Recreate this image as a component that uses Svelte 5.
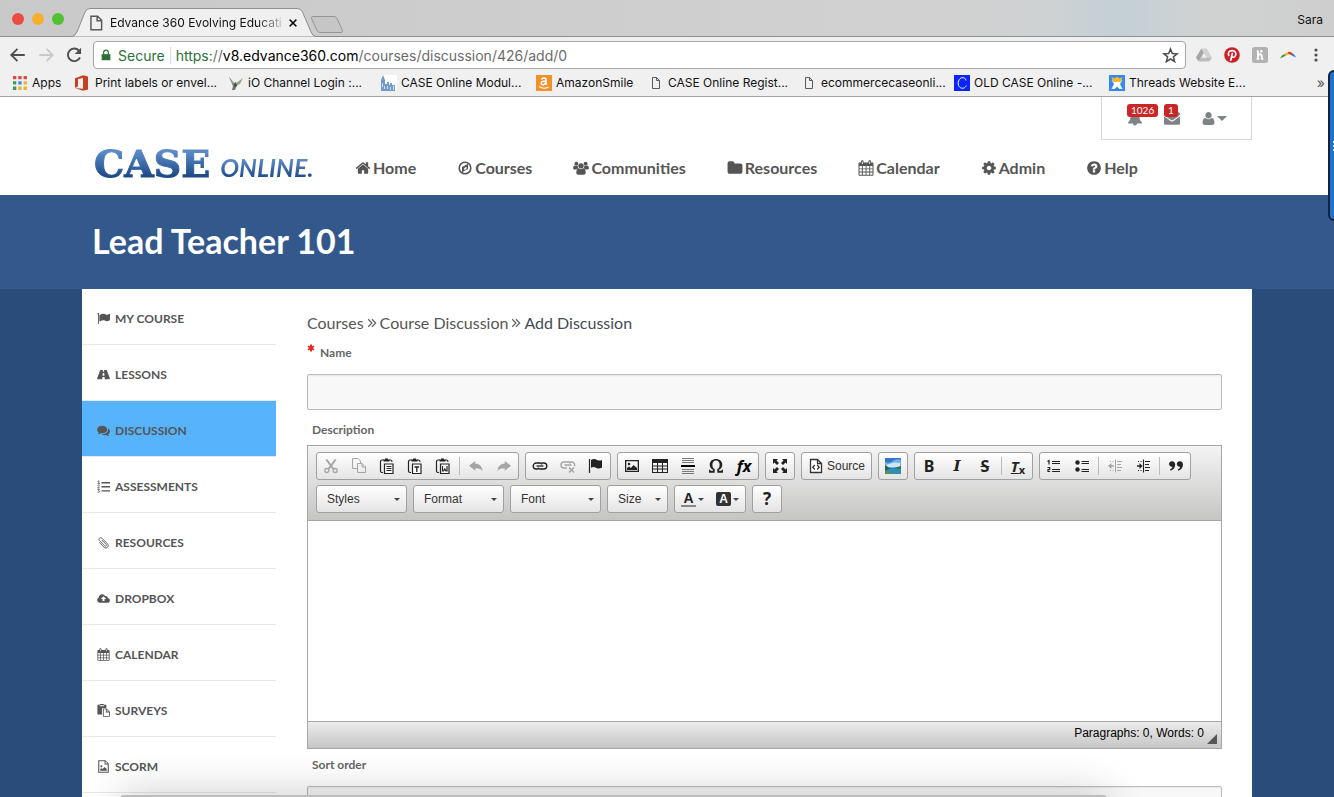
<script>
  const icons = {
    home: ['0 0 1792 1792', '<path d="M1472 992v480q0 26-19 45t-45 19h-384v-384h-256v384h-384q-26 0-45-19t-19-45v-480q0-1 .5-3t.5-3l575-474 575 474q1 2 1 6zm223-69l-62 74q-8 9-21 11h-3q-13 0-21-7l-692-577-692 577q-12 8-24 7-13-2-21-11l-62-74q-8-10-7-23.5t11-21.5l719-599q32-26 76-26t76 26l244 204v-195q0-14 9-23t23-9h192q14 0 23 9t9 23v408l219 182q10 8 11 21.5t-7 23.5z"/>'],
    compass: ['0 0 16 16', '<circle cx="8" cy="8" r="5.800" fill="none" stroke="currentColor" stroke-width="1.600"/><path fill-rule="evenodd" d="M11 3.800v5.200L5 12.200V7zM7.200 7.900v2.400L9.500 9V6.700z"/>'],
    users: ['0 0 18 16', '<circle cx="3.8" cy="3.3" r="2.2"/><circle cx="14.2" cy="3.3" r="2.2"/><path d="M.2 8.6c0-2.2.6-3.5 1.8-3.5.6.5 2.2.9 3.4.4-.2 1.2.1 2.2.9 3.1-1.2 0-2 .4-2.6 1.1H2.2C1 9.700.2 9.400.2 8.600zM17.800 8.600c0-2.200-.6-3.500-1.800-3.500-.6.5-2.200.9-3.400.4.2 1.200-.1 2.200-.9 3.100 1.200 0 2 .4 2.600 1.100h1.500c1.200 0 2-.3 2-1.100z"/><circle cx="9" cy="5.600" r="3"/><path d="M3.700 13.300c0-3 .9-5 2.800-5 .6.500 1.500 1 2.500 1s1.900-.5 2.500-1c1.900 0 2.800 2 2.800 5 0 1.500-.9 2.200-2.300 2.200H6c-1.400 0-2.300-.7-2.300-2.200z"/>'],
    folder: ['0 0 1792 1792', '<path d="M1728 608v704q0 92-66 158t-158 66h-1216q-92 0-158-66t-66-158v-960q0-92 66-158t158-66h320q92 0 158 66t66 158v32h672q92 0 158 66t66 158z"/>'],
    calendar: ['0 0 16 16', '<path fill-rule="evenodd" d="M1.500 2.500H3V1.600C3 .8 3.500.3 4.300.3s1.300.5 1.300 1.300v.9h4.800v-.9c0-.8.500-1.300 1.300-1.300S13 .8 13 1.600v.9h1.500c.600 0 1 .400 1 1v11.300c0 .600-.400 1-1 1h-13c-.600 0-1-.400-1-1V3.500c0-.600.400-1 1-1zM1.500 6v2.400h2.400V6zm3.300 0v2.400h2.800V6zm3.700 0v2.400h2.800V6zm3.700 0v2.400h2.300V6zM1.500 9.300v2.300h2.400V9.300zm3.300 0v2.300h2.800V9.300zm3.700 0v2.300h2.800V9.300zm3.700 0v2.300h2.300V9.300zM1.500 12.500v2.300h2.400v-2.300zm3.300 0v2.300h2.800v-2.300zm3.700 0v2.300h2.800v-2.300zm3.700 0v2.300h2.300v-2.300zM3.900 1.600v2.300h.8V1.600zm7.400 0v2.300h.8V1.600z"/>'],
    cog: ['0 0 1792 1792', '<path d="M1152 896q0-106-75-181t-181-75-181 75-75 181 75 181 181 75 181-75 75-181zm512-109v222q0 12-8 23t-20 13l-185 28q-19 54-39 91 35 50 107 138 10 12 10 25t-9 23q-27 37-99 108t-94 71q-12 0-26-9l-138-108q-44 23-91 38-16 136-29 186-7 28-36 28h-222q-14 0-24.5-8.5t-11.5-21.5l-28-184q-49-16-90-37l-141 107q-10 9-25 9-14 0-25-11-126-114-165-168-7-10-7-23 0-12 8-23 15-21 51-66.5t54-70.5q-27-50-41-99l-183-27q-13-2-21-12.5t-8-23.5v-222q0-12 8-23t19-13l186-28q14-46 39-92-40-57-107-138-10-12-10-24 0-10 9-23 26-36 98.5-107.5t94.5-71.5q13 0 26 10l138 107q44-23 91-38 16-136 29-186 7-28 36-28h222q14 0 24.5 8.5t11.5 21.5l28 184q49 16 90 37l142-107q9-9 24-9 13 0 25 10 129 119 165 170 7 8 7 22 0 12-8 23-15 21-51 66.5t-54 70.5q26 50 41 98l183 28q13 2 21 12.5t8 23.5z"/>'],
    help: ['0 0 1792 1792', '<path d="M1024 1376v-192q0-14-9-23t-23-9h-192q-14 0-23 9t-9 23v192q0 14 9 23t23 9h192q14 0 23-9t9-23zm256-672q0-88-55.5-163t-138.5-116-170-41q-243 0-371 213-15 24 8 42l132 100q7 6 19 6 16 0 25-12 53-68 86-92 34-24 86-24 48 0 85.5 26t37.5 59q0 38-20 61t-68 45q-63 28-115.5 86.5t-52.5 125.5v36q0 14 9 23t23 9h192q14 0 23-9t9-23q0-19 21.5-49.5t54.5-49.5q32-18 49-28.5t46-35 44.5-48 28-60.5 12.5-81zm384 192q0 209-103 385.5t-279.5 279.5-385.5 103-385.5-103-279.5-279.5-103-385.5 103-385.5 279.5-279.5 385.5-103 385.5 103 279.5 279.5 103 385.5z"/>'],
    envelope: ['0 0 1792 1792', '<path d="M1792 710v794q0 66-47 113t-113 47h-1472q-66 0-113-47t-47-113v-794q44 49 101 87 362 246 497 345 57 42 92.5 65.5t94.5 48 110 24.5h2q51 0 110-24.5t94.5-48 92.5-65.5q170-123 498-345 57-39 100-87zm0-294q0 79-49 151t-122 123q-376 261-468 325-10 7-42.5 31t-54 38.5-52 32.5-57.5 27-50 9h-2q-23 0-50-9t-57.5-27-52-32.5-54-38.5-42.5-31q-91-64-262-182.5t-205-142.5q-62-42-117-115.5t-49-136.5q0-78 41.5-130t118.5-52h1472q65 0 112.5 47t47.5 113z"/>'],
    user: ['0 0 1792 1792', '<path d="M1600 1405q0 120-73 189.5t-194 69.5h-874q-121 0-194-69.5t-73-189.5q0-53 3.5-103.5t14-109 26.5-108.5 43-97.5 62-81 85.5-53.5 111.5-20q9 0 42 21.5t74.5 48 108 48 133.5 21.5 133.5-21.5 108-48 74.5-48 42-21.5q61 0 111.5 20t85.5 53.5 62 81 43 97.5 26.5 108.5 14 109 3.5 103.5zm-320-893q0 159-112.5 271.5t-271.5 112.5-271.5-112.5-112.5-271.5 112.5-271.5 271.5-112.5 271.5 112.5 112.5 271.5z"/>'],
    bell: ['0 0 16 16', '<path d="M8 .8c.5 0 .9.4.9.9v.5c2.300.4 3.600 2.200 3.600 4.500 0 3 1 4.600 2.500 5.700 0 .6-.4 1-1 1h-4c0 1.200-.8 2-2 2s-2-.8-2-2H2c-.6 0-1-.4-1-1 1.500-1.100 2.500-2.700 2.500-5.700 0-2.300 1.300-4.100 3.600-4.500v-.5c0-.5.4-.9.9-.9z"/>'],
    flag: ['0 0 1792 1792', '<path d="M320 256q0 72-64 110v1266q0 13-9.500 22.500t-22.500 9.500h-64q-13 0-22.500-9.500t-9.500-22.500v-1266q-64-38-64-110 0-53 37.500-90.500t90.500-37.500 90.500 37.500 37.500 90.500zm1472 64v763q0 25-12.500 38.500t-39.500 27.500q-215 116-369 116-61 0-123.500-22t-108.500-48-115.500-48-142.500-22q-192 0-464 146-17 9-33 9-26 0-45-19t-19-45v-742q0-32 31-55 21-14 79-43 236-120 421-120 107 0 200 29t219 88q38 19 88 19 54 0 117.500-21t110-47 88-47 54.500-21q26 0 45 19t19 45z"/>'],
    road: ['0 0 16 16', '<path fill-rule="evenodd" d="M4.500 2.500H7.300L7.200 4.500h1.600l-.1-2h2.800c.3 0 .5.200.7.600l3.500 9.200c.3.900 0 1.400-.6 1.400H9.600L9.300 11H6.700l-.3 2.700H.9c-.6 0-.9-.5-.6-1.400L3.800 3.100c.2-.4.400-.6.700-.6zM7.100 6l-.3 3.400h2.400L8.900 6z"/>'],
    comments: ['0 0 1792 1792', '<path d="M1408 768q0 139-94 257t-256.500 186.500-353.500 68.500q-86 0-176-16-124 88-278 128-36 9-86 16h-3q-11 0-20.500-8t-11.500-21q-1-3-1-6.500t.5-6.500 2-6l2.500-5 3.500-5.500 4-5 4.500-5 4-4.500q5-6 23-25t26-29.500 22.500-29 25-38.500 20.500-44q-124-72-195-177t-71-224q0-139 94-257t256.500-186.500 353.500-68.500 353.500 68.500 256.500 186.500 94 257zm384 256q0 120-71 224.500t-195 176.500q10 24 20.500 44t25 38.500 22.500 29 26 29.500 23 25q1 1 4 4.500t4.500 5 4 5 3.500 5.500l2.500 5 2 6 .5 6.500-1 6.500q-3 14-13 22t-22 7q-50-7-86-16-154-40-278-128-90 16-176 16-271 0-472-132 58 4 88 4 161 0 309-45t264-129q125-92 192-212t67-254q0-77-23-152 129 71 204 178t75 230z"/>'],
    listol: ['0 0 16 16', '<path d="M5.500 2.500H16v1.700H5.500zm0 5H16v1.700H5.500zm0 5H16v1.700H5.500z"/><path d="M.8 1.800 2.200.8V4.500M.8 4.500h2.800M.6 6.800c.8-1 2.600-.8 2.400.4C2.900 8 1 8.500.7 9.800h2.700M.6 11.700h2.600l-1.500 1.500c2.600.1 1.600 2.800-1.200 1.800" fill="none" stroke="currentColor" stroke-width="1"/>'],
    clip: ['0 0 16 16', '<path d="M6.200 5.200l5 5c1.300 1.300-.5 3.100-1.800 1.800L3.200 5.800c-2.200-2.200.7-5.200 3-3l6.600 6.700c3 3-1 7.200-4.200 4.200L3 8.200" fill="none" stroke="currentColor" stroke-width="1.100" stroke-linecap="round"/>'],
    cloud: ['0 0 18 16', '<path fill-rule="evenodd" d="M4.200 14C1.900 14 .2 12.400.2 10.200c0-1.600.9-2.900 2.300-3.500C2.500 4 4.500 2 7.100 2c2 0 3.600 1.100 4.300 2.800 1.800-.8 3.700.4 3.500 2.500 1.800.4 2.900 1.700 2.900 3.300 0 2-1.500 3.400-3.400 3.400zM9 4.900 5.300 8.600h2.300v3h2.800v-3h2.300z"/>'],
    paste: ['0 0 16 16', '<path fill-rule="evenodd" d="M.5.8h3V0h5v.8h3v4H7.300c-.7 0-1.200.5-1.200 1.200V13H.5zM3.300 1.600v1.200h5.400V1.600z"/><path fill-rule="evenodd" d="M7.200 5.500h4.600l4 4v6.300H7.200zM8.300 6.600v8.100h6.400v-4.300h-3.800V6.600zM12 7v2.300h2.300z"/>'],
    fileimage: ['0 0 16 16', '<path fill-rule="evenodd" d="M1.500.2h8.800l4.200 4.200v11.400h-13zM2.800 1.500v13h10.400V5.600H9.300V1.500zM10.500 1.700v2.700h2.700z"/><circle cx="5.300" cy="7.800" r="1.300"/><path d="M4 13.200v-2l1.500-1.200 1.200 1.200L9.400 8.500 12 11v2.200z"/>'],
    cut: ['0 0 16 16', '<path d="M3.300 1.500 10.500 11M12.700 1.500 5.500 11" stroke="currentColor" stroke-width="2" fill="none"/><circle cx="3.800" cy="12.500" r="2" fill="none" stroke="currentColor" stroke-width="1.300"/><circle cx="12.200" cy="12.500" r="2" fill="none" stroke="currentColor" stroke-width="1.300"/>'],
    copy: ['0 0 16 16', '<path d="M7 10.500H1.500v-10H7l2.500 2.500v2M6.500 5.500H11l3.500 3.500v5.500h-8zM11 5.500V9h3.500" fill="none" stroke="currentColor"/>'],
    pasteplain: ['0 0 16 16', '<path d="M5 2H3Q1.500 2 1.500 3.500V13Q1.500 14.500 3 14.500H4M10 2h1.500Q13 2 13 4" fill="none" stroke="currentColor" stroke-width="1.200"/><path d="M4.500 3.500v-2h1.500V.5h3v1h1.500v2z" fill="currentColor"/><path d="M5.500 6h8.500v9.500H5.500z" fill="#fff" stroke="currentColor" stroke-width="1.200"/><path d="M7.500 8.500h5M7.500 10.500h5M7.500 12.500h5" stroke="currentColor"/>'],
    pastetext: ['0 0 16 16', '<path d="M5 2H3Q1.500 2 1.500 3.500V13Q1.500 14.500 3 14.500H4M10 2h1.500Q13 2 13 4" fill="none" stroke="currentColor" stroke-width="1.200"/><path d="M4.500 3.500v-2h1.500V.5h3v1h1.500v2z"/><path d="M5.500 6h8.500v9.500H5.500z" fill="#fff" stroke="currentColor" stroke-width="1.200"/><path d="M7.500 9h4.600M9.800 9v5" stroke="currentColor" stroke-width="1.300"/>'],
    pasteword: ['0 0 16 16', '<path d="M5 2H3Q1.500 2 1.500 3.500V13Q1.500 14.500 3 14.500H4M10 2h1.500Q13 2 13 4" fill="none" stroke="currentColor" stroke-width="1.200"/><path d="M4.500 3.500v-2h1.500V.5h3v1h1.500v2z"/><path d="M5.500 6h8.500v9.500H5.500z" fill="#fff" stroke="currentColor" stroke-width="1.200"/><path d="M7.500 8v5h1l1.300-2 1.200 2h1V8" fill="none" stroke="currentColor" stroke-width="1.200"/>'],
    undo: ['0 0 16 16', '<path d="M1 7.800 7.300 3v2.800c4.200 0 6.900 2.600 7.200 7.200-1.500-2.200-3.500-2.800-7.200-2.800v2.600z"/>'],
    redo: ['0 0 16 16', '<path d="M15 7.800 8.700 3v2.800C4.500 5.800 1.800 8.400 1.500 13c1.500-2.200 3.500-2.800 7.200-2.800v2.600z"/>'],
    link: ['0 0 16 16', '<path d="M6.500 5H4.200a3 3 0 0 0 0 6h2.300M9.500 5h2.300a3 3 0 0 1 0 6H9.500" fill="none" stroke="currentColor" stroke-width="1.400"/><path d="M4.500 8h7" stroke="currentColor" stroke-width="1.300"/><path d="M6 5h2Q9.700 5 9.700 6.600M10 11H8Q6.300 11 6.300 9.400" fill="none" stroke="currentColor" stroke-width="1.300"/>'],
    unlink: ['0 0 16 16', '<path d="M7 4H4a3 3 0 0 0 0 6h3M9 4h3a3 3 0 0 1 2.500 4M4.500 7h7M7 4h1.500Q10 4 10 5.500" fill="none" stroke="currentColor" stroke-width="1.400"/><path d="M9 9.500l5 5M14 9.500l-5 5" stroke="currentColor" stroke-width="1.600"/>'],
    anchor: ['0 0 16 16', '<path d="M1.500 1v14" stroke="currentColor" stroke-width="1.200"/><path d="M3 2q3-2 6 0 3 1.200 5 0v7.500q-3 2-6 .2-2.500-1.200-5 0z"/>'],
    image: ['0 0 16 16', '<path fill-rule="evenodd" d="M1 2h14v12H1zm1.300 1.300v9.400h11.400V3.300z"/><circle cx="5" cy="6" r="1.300"/><path d="M3 12v-2l2-1.500 2 1.500L9.500 7 13 10v2z"/>'],
    table: ['0 0 16 16', '<path fill-rule="evenodd" d="M0 1h16v14H0zm1 4v2.400h4V5zm5 0v2.400h4V5zm5 0v2.400h4V5zM1 8.400v2.200h4V8.400zm5 0v2.200h4V8.400zm5 0v2.200h4V8.400zM1 11.600V14h4v-2.400zm5 0V14h4v-2.400zm5 0V14h4v-2.400z"/>'],
    hr: ['0 0 16 16', '<path d="M2 .5h12M2 2.500h12M2 4.500h12M2 11.500h12M2 13.500h12M2 15.500h12" stroke="#777"/><path d="M1 7h14v2H1z" fill="#000"/>'],
    omega: ['0 0 16 16', '<path d="M1 14.800V11.800h1l.5 1h2.500v-1C3 10.700 1.700 9 1.700 6.700 1.700 3.300 4.300 1 8 1s6.300 2.300 6.300 5.700c0 2.300-1.300 4-3.300 5.100v1h2.500l.5-1h1v3H9.300v-3.700c1.600-.7 2.300-2.100 2.300-4.300 0-2.700-1.300-4.300-3.600-4.300S4.400 4.100 4.400 6.800c0 2.200.7 3.600 2.300 4.300v3.700z"/>'],
    full: ['0 0 16 16', '<path d="M1 1h5L4.500 2.500 7 5 5 7 2.500 4.500 1 6zM15 1v5l-1.500-1.500L11 7 9 5l2.500-2.500L10 1zM1 15v-5l1.500 1.500L5 9l2 2-2.500 2.500L6 15zM15 15h-5l1.500-1.500L9 11l2-2 2.500 2.500L15 10z"/>'],
    source: ['0 0 16 16', '<path d="M2.500 1.500h7l4 4v9h-11z" fill="#fff" stroke="currentColor" stroke-width="1.300"/><path d="M9.500 1.500v4h4M6.800 7 4.800 9.300l2 2.200M9.200 7l2 2.300-2 2.200" fill="none" stroke="currentColor" stroke-width="1.300"/>'],
    picture: ['0 0 16 16', '<path fill="#3578c8" d="M0 0h16v16H0z"/><path fill="#6fb0e8" d="M0 4q5 2 8-1t8-1v8H0z"/><path fill="#cfe6f5" d="M1 7q4-1 6-2t8 0v4H2z"/><path fill="#2f5f55" d="M0 7l7 4.500L0 14z"/><path fill="#2f8fb0" d="M4 11l12-1v6H0v-3z"/><path fill="#3b6a46" d="M9 10l7-2v3z"/><path fill="#5f8d4c" d="M0 13l9 3H0z"/>'],
    ol: ['0 0 16 16', '<path d="M6 3.500h8M6 5.500h8M6 11.500h8M6 13.500h8" stroke="currentColor" stroke-width="1.100"/><path d="M1.500 3.500 3 2.500v4M1.500 9.500h2.200v2H2v2h2.200" fill="none" stroke="currentColor" stroke-width="1.200"/>'],
    ul: ['0 0 16 16', '<circle cx="3.500" cy="4.500" r="2.200"/><circle cx="3.500" cy="11.500" r="2.200"/><path d="M7.500 3.500H15M7.500 5.500H15M7.500 11.500H15M7.500 13.500H15" stroke="currentColor" stroke-width="1.100"/>'],
    outdent: ['0 0 16 16', '<path d="M8.500 1.500v13M10 3.500h5M10 6.500h4M10 9.500h5M10 12.500h4" stroke="currentColor"/><path d="M1 8l3.500-3v2.300H7v1.400H4.500V11z"/><path d="M3 3.500h1M5.500 3.500h1M3 12.500h1M5.500 12.500h1" stroke="currentColor"/>'],
    indent: ['0 0 16 16', '<path d="M8.500 1.500v13M10 3.500h5M10 6.500h4M10 9.500h5M10 12.500h4" stroke="currentColor" stroke-width="1.100"/><path d="M7.500 8 4.500 5v2.300H2v1.400h2.500V11z"/><path d="M3 3.500h1M5.500 3.500h1M3 12.500h1M5.500 12.500h1" stroke="currentColor"/>'],
    quote: ['0 0 16 16', '<path d="M4 3.200c2 0 3.200 1.300 3.200 3.300 0 3-1.900 5.300-4.700 6.200l-.5-1.200c1.400-.7 2.300-1.600 2.400-2.800C2.300 8.900 1 7.700 1 6.100c0-1.700 1.300-2.900 3-2.900zM11.800 3.200c2 0 3.200 1.300 3.200 3.300 0 3-1.900 5.300-4.700 6.200l-.5-1.200c1.400-.7 2.300-1.600 2.400-2.800-2.100.2-3.400-1-3.400-2.600 0-1.700 1.300-2.900 3-2.900z"/>'],
    page: ['0 0 16 16', '<path d="M3.500 2h6l3.500 3.500V14H3.500zM9 2v4h4" fill="none" stroke="#5a5a5a" stroke-width="1.300"/>'],
    smallpage: ['0 0 16 16', '<path d="M4.500 2.500h4l3 3v8h-7zM8.500 2.500v3h3" fill="none" stroke="#5a5a5a"/>'],
    apps: ['0 0 16 16', '<path fill="#df4a3c" d="M1 1h3.300v3.300H1zM6.300 1h3.300v3.300H6.300zM11.600 1h3.300v3.300h-3.300z"/><path fill="#3b9a50" d="M1 6.300h3.300v3.300H1zM1 11.600h3.300v3.300H1z"/><path fill="#4083e8" d="M6.300 6.300h3.300v3.300H6.300z"/><path fill="#f0b02c" d="M11.600 6.300h3.300v3.300h-3.300zM6.300 11.600h3.300v3.300H6.300zM11.600 11.600h3.300v3.300h-3.300z"/>'],
    office: ['0 0 16 16', '<path fill="#c8401f" d="M0 3.200 8 .3l5 1.300v12.800L8 15.700 0 13l8 .8V2.900L3 4v7.300L0 13z"/>'],
    bird: ['0 0 16 16', '<path d="M1 2l5 6 2-1 1 3-2 5H4l1-4z" fill="#6f7768"/><path d="M1 1l5 8-1 1zM8 8l7-5-3 6-4 2z" fill="#9aa291"/><path d="M6 9l2-1 1 3-2 1z" fill="#3f4a38"/>'],
    castle: ['0 0 16 16', '<path fill="#fff" d="M0 0h16v16H0z"/><path fill="#6f9bcb" d="M0 16V5l2-5 2 5v4h2V7h2v3h1V8h2v2h2V9l1 2v5z"/><path fill="#cfe0f0" d="M1 8h1v4H1zM3 11h1v3H3zM6 11h1v3H6zM9 12h1v3H9zM12 11h1v4h-1z"/>'],
    amazon: ['0 0 16 16', '<path fill="#f0922b" d="M0 0h16v16H0z"/><path d="M5.500 4.500c.8-2 4.500-2 4.500.3v4l.8.900M9.800 6C7 6 5.200 6.600 5.200 8.200c0 2.300 3.300 2 4.600-.4" fill="none" stroke="#fff" stroke-width="1.600"/><path d="M3 11.500q5 3.200 9.500.5" fill="none" stroke="#fff" stroke-width="1.100"/>'],
    cbox: ['0 0 16 16', '<path fill="#0a24fb" d="M0 0h16v16H0z"/><path d="M12 5.500C11.500 1.500 5 1.300 4.200 7.500c-.6 6.500 6.600 7.500 8 3" fill="none" stroke="#fff" stroke-width="1"/>'],
    wix: ['0 0 16 16', '<path fill="#3388f5" d="M0 0h16v16H0z"/><path d="M2.500 5l3.500 1.500h4L13.500 5 11 9l2.500 5h-3L8 11.500 5.500 14h-3L5 9z" fill="#fff"/><path d="M2.500 2 5.500 3.300 8 1.700l2.500 1.600L13.500 2l-1.500 5H4z" fill="#f5b82e"/>'],
    back: ['0 0 16 16', '<path d="M14 8H2M7.500 2.500 2 8l5.500 5.500" fill="none" stroke="currentColor" stroke-width="1.600"/>'],
    forward: ['0 0 16 16', '<path d="M2 8h12M8.500 2.500 14 8l-5.500 5.500" fill="none" stroke="currentColor" stroke-width="1.600"/>'],
    reload: ['0 0 16 16', '<path d="M13.300 10.200A5.600 5.600 0 1 1 12.300 4" fill="none" stroke="currentColor" stroke-width="1.700"/><path d="M14.300 1.500v5.700H8.600z"/>'],
    lock: ['0 0 16 16', '<path d="M3 7h10v7H3z"/><path d="M5.300 7V5a2.700 2.700 0 0 1 5.400 0v2" fill="none" stroke="currentColor" stroke-width="1.400"/>'],
    star: ['0 0 16 16', '<path d="M8 1.800l1.700 4.300 4.500.3-3.500 2.900 1.200 4.500L8 11.300l-3.900 2.500 1.200-4.500L1.800 6.400l4.500-.3z" fill="none" stroke="currentColor" stroke-width="1.400"/>'],
    drive: ['0 0 16 16', '<path fill="#a6a6a6" d="M5.300 1.500 0 10.500l2.700 4L8 5.500z"/><path fill="#d2d2d2" d="M5.300 1.500h5.400l5.300 9h-5.400z"/><path fill="#bcbcbc" d="M2.700 14.500h10.600l2.700-4H5.200z"/><path d="M8 7l2 3.500H6z" fill="#eee"/>'],
    pin: ['0 0 16 16', '<circle cx="8" cy="8" r="7.800" fill="#cb2027"/><path d="M5 9C3.300 6 5 3.600 8.200 3.600c2.900 0 4.400 2.400 3.300 4.900-.9 2.300-3 2.200-3.600 1M8.500 5.800 6.500 14" fill="none" stroke="#fff" stroke-width="1.600"/>'],
    honey: ['0 0 16 16', '<rect width="16" height="16" rx="2.500" fill="#b2b2b2"/><path d="M6 3.500v8.500M6 8.700c.8-2 3.800-2 3.800.3v3" fill="none" stroke="#fff" stroke-width="1.800"/><path d="M4.500 4H6M4.500 12.200h3M9 12.200h2.500" stroke="#fff" stroke-width="1.200"/><circle cx="9.300" cy="4.300" r="1.200" fill="#fff"/>'],
    arc: ['0 0 16 16', '<path d="M0 11.500 2 8.500 5.500 6.500 6 8.500z" fill="#38883f"/><path d="M4 7.300 8.500 4.500 9 7 5.500 9z" fill="#ecb52c"/><path d="M8 4.700 11 5l2 2-1.500 1.200L8.500 7z" fill="#d8442f"/><path d="M12 6.200 14.500 7.800 16 10.500l-4.500-2z" fill="#3f7bd8"/>'],
    dots: ['0 0 16 16', '<circle cx="8" cy="3" r="1.600"/><circle cx="8" cy="8" r="1.600"/><circle cx="8" cy="13" r="1.600"/>'],
    close: ['0 0 16 16', '<path d="M3.500 3.500l9 9M12.500 3.500l-9 9" stroke="currentColor" stroke-width="1.900"/>'],
    chevrons: ['0 0 16 16', '<path d="M2 2l6 6-6 6M8 2l6 6-6 6" fill="none" stroke="currentColor" stroke-width="1.700"/>'],
    required: ['0 0 16 16', '<path d="M8 1v14M2 4.500l12 7M14 4.500l-12 7" stroke="currentColor" stroke-width="4"/>'],
  };

  const bookmarks = [
    ['apps', 'Apps', 'tiny'],
    ['office', 'Print labels or envel...', ''],
    ['bird', 'iO Channel Login :...', ''],
    ['castle', 'CASE Online Modul...', 'wide'],
    ['amazon', 'AmazonSmile', 'short'],
    ['smallpage', 'CASE Online Regist...', ''],
    ['smallpage', 'ecommercecaseonli...', ''],
    ['cbox', 'OLD CASE Online -...', 'wide'],
    ['wix', 'Threads Website E...', ''],
  ];
  const nav = [
    ['home', 'Home'], ['compass', 'Courses'], ['users', 'Communities'], ['folder', 'Resources'],
    ['calendar', 'Calendar'], ['cog', 'Admin'], ['help', 'Help'],
  ];
  const side = [
    ['flag', 'MY COURSE'], ['road', 'LESSONS'], ['comments', 'DISCUSSION'], ['listol', 'ASSESSMENTS'],
    ['clip', 'RESOURCES'], ['cloud', 'DROPBOX'], ['calendar', 'CALENDAR'], ['paste', 'SURVEYS'],
    ['fileimage', 'SCORM'],
  ];
  const toolRow = [
    [['cut', 'Cut', true], ['copy', 'Copy', true], ['pasteplain', 'Paste'], ['pastetext', 'Paste as text'], ['pasteword', 'Paste from Word'], null, ['undo', 'Undo', true], ['redo', 'Redo', true]],
    [['link', 'Link'], ['unlink', 'Unlink', true], ['anchor', 'Anchor']],
    [['image', 'Image'], ['table', 'Table'], ['hr', 'Horizontal line'], ['omega', 'Special character'], ['fx', 'Formula']],
    [['full', 'Maximize']],
    [['source', 'Source']],
    [['picture', 'Media']],
    [['B', 'Bold'], ['I', 'Italic'], ['S', 'Strikethrough'], null, ['T', 'Remove format']],
    [['ol', 'Numbered list'], ['ul', 'Bulleted list'], null, ['outdent', 'Decrease indent', true], ['indent', 'Increase indent'], null, ['quote', 'Block quote']],
  ];
  const combos = ['Styles', 'Format', 'Font', 'Size'];
</script>

{#snippet icon(name, size = 16)}
  <svg class="icon" viewBox={icons[name][0]} width={size} height={size} fill="currentColor" aria-hidden="true">{@html icons[name][1]}</svg>
{/snippet}

<div class="window">
  <div class="chrome">
    <div class="tabs">
      <div class="lights"><i class="red"></i><i class="amber"></i><i class="green"></i></div>
      <div class="tab">
        <svg class="shape" viewBox="0 0 244 29" preserveAspectRatio="none" aria-hidden="true"><path d="M0 28.500 Q3 28 5 24 L13 4 Q14.500 .5 18 .5 H225 Q229 .5 230.500 4 L239 24 Q240.500 28 244 28.500" fill="#f0f0f0" stroke="#8e8e8e"/></svg>
        <span class="tab-body">{@render icon('page', 18)}<span class="tab-title">Edvance 360 Evolving Educati</span><button class="plain" aria-label="Close tab">{@render icon('close', 12)}</button></span>
      </div>
      <button class="plain newtab" aria-label="New tab"><svg width="34" height="17" viewBox="0 0 34 17"><path d="M3 .5h21q2 0 3 2l5.500 12q.5 2-1.500 2H10q-2 0-3-2L1.500 2.500Q1 .5 3 .5z" fill="#c6c6c6" stroke="#949494"/></svg></button>
      <span class="profile">Sara</span>
    </div>
    <div class="toolbar">
      <button class="plain" aria-label="Back">{@render icon('back', 18)}</button>
      <button class="plain dim" aria-label="Forward">{@render icon('forward', 18)}</button>
      <button class="plain" aria-label="Reload">{@render icon('reload', 18)}</button>
      <div class="address">
        <span class="secure">{@render icon('lock', 14)}Secure</span>
        <span class="url"><b class="scheme">https:</b><span>//</span><b class="host">v8.edvance360.com</b><span>/courses/discussion/426/add/0</span></span>
        <button class="plain" aria-label="Bookmark">{@render icon('star', 17)}</button>
      </div>
      <div class="extensions">
        {@render icon('drive')}{@render icon('pin')}{@render icon('honey')}{@render icon('arc')}{@render icon('dots')}
      </div>
    </div>
    <div class="bookmarks">
      {#each bookmarks as [ic, label, size]}
        <a class="bookmark {size}" href="#top">{@render icon(ic)}<span>{label}</span></a>
      {/each}
      <span class="more">»</span>
    </div>
  </div>

  <div class="page" id="top">
    <header>
      <div class="container head">
        <a class="logo" href="#top"><span class="case">CASE</span><span class="online">ONLINE.</span></a>
        <nav class="main-nav">
          {#each nav as [ic, label]}
            <a href="#top">{@render icon(ic, 16)}{label}</a>
          {/each}
        </nav>
        <div class="account">
          <a href="#top" class="alert" aria-label="Notifications">{@render icon('bell', 16)}<span class="badge">1026</span></a>
          <a href="#top" class="alert" aria-label="Messages">{@render icon('envelope', 16)}<span class="badge">1</span></a>
          <a href="#top" class="me" aria-label="Account">{@render icon('user', 15)}<i class="caret"></i></a>
        </div>
      </div>
    </header>
    <div class="band"><div class="container"><h1>Lead Teacher 101</h1></div></div>
    <div class="container body">
      <aside>
        {#each side as [ic, label]}
          <a href="#top" class:active={label === 'DISCUSSION'}>{@render icon(ic, 13)}{label}</a>
        {/each}
      </aside>
      <main>
        <div class="crumbs"><a href="#top">Courses</a>{@render icon('chevrons', 10)}<a href="#top">Course Discussion</a>{@render icon('chevrons', 10)}<span class="here">Add Discussion</span></div>
        <label class="name" for="name"><span class="star">{@render icon('required', 8)}</span>Name</label>
        <input id="name" type="text" />
        <label class="desc" for="description">Description</label>
        <div class="editor">
          <div class="tools">
            <div class="row">
              {#each toolRow as group}
                <div class="group">
                  {#each group as item}
                    {#if item === null}
                      <i class="sep"></i>
                    {:else if item[0] === 'source'}
                      <button class="source">{@render icon('source')}Source</button>
                    {:else}
                      <button disabled={item[2] ?? false} aria-label={item[1]}>
                        {#if item[0] === 'fx'}<span class="fx">fx</span>
                        {:else if item[0] === 'B'}<b class="letter">B</b>
                        {:else if item[0] === 'I'}<i class="letter serif">I</i>
                        {:else if item[0] === 'S'}<s class="letter">S</s>
                        {:else if item[0] === 'T'}<span class="letter clear"><u>T</u><small>x</small></span>
                        {:else}{@render icon(item[0])}{/if}
                      </button>
                    {/if}
                  {/each}
                </div>
              {/each}
            </div>
            <div class="row">
              {#each combos as name}
                <div class="group combo" class:small={name === 'Size'}>
                  <select aria-label={name}><option>{name}</option></select>
                  <i class="tri"></i>
                </div>
              {/each}
              <div class="group">
                <button class="color" aria-label="Text colour"><span class="fore">A</span><i class="tri"></i></button>
                <button class="color" aria-label="Background colour"><span class="back">A</span><i class="tri"></i></button>
              </div>
              <div class="group"><button aria-label="About"><span class="letter about">?</span></button></div>
            </div>
          </div>
          <textarea id="description"></textarea>
          <div class="status"><span>Paragraphs: 0, Words: 0</span><i class="grip"></i></div>
        </div>
        <label class="desc order" for="sort">Sort order</label>
        <input id="sort" type="text" />
      </main>
    </div>
  </div>
  <div class="dock"></div>
  <div class="handle"><i></i><i></i><i></i></div>
</div>

<style>
  :global(body) { margin: 0; }
  * { box-sizing: border-box; }
  a { color: inherit; text-decoration: none; }
  .icon { flex: none; display: block; }
  button, input, select, textarea { font: inherit; color: inherit; margin: 0; }
  .plain { border: 0; background: none; padding: 0; display: flex; }
  .window { position: relative; height: 100vh; overflow: hidden; display: flex; flex-direction: column; font-family: Lato, sans-serif; color: #555; }

  .chrome { flex: none; font-family: Inter, sans-serif; color: #111; background: #f0f0f0; border-bottom: 1px solid #a3a3a3; }
  .tabs { height: 37px; display: flex; align-items: flex-end; background: linear-gradient(90deg, #c9c9c9, #d1d1d1 70%, #cfd2d3 78%, #c3d0d6 84%, #d0d2d2 90%, #cecece); box-shadow: inset 0 -1px #8e8e8e; }
  .lights { display: flex; gap: 8px; padding: 0 0 12px 12px; width: 72px; }
  .lights i { width: 12px; height: 12px; border-radius: 50%; }
  .red { background: #ea4b42; }
  .amber { background: #f5b02d; }
  .green { background: #50c132; }
  .tab { position: relative; width: 244px; height: 29px; }
  .shape { position: absolute; inset: 0; width: 100%; height: 100%; }
  .tab-body { position: relative; display: flex; align-items: center; height: 29px; padding: 0 17px 0 15px; gap: 5px; font-size: 12px; }
  .tab-title { flex: 1; white-space: nowrap; -webkit-mask-image: linear-gradient(90deg, #000 85%, #0003); mask-image: linear-gradient(90deg, #000 85%, #0003); }
  .newtab { margin: 0 0 4px -6px; }
  .profile { margin-left: auto; padding: 0 11px 10px 0; font-size: 12px; }
  .toolbar { height: 35px; display: flex; align-items: center; padding: 1px 10px 0 9px; gap: 10px; color: #4e4e4e; }
  .dim { color: #c9c9c9; }
  .address { flex: 1; height: 28px; display: flex; align-items: center; padding: 0 6px 0 5px; background: #fff; border: 1px solid #a5a5a5; border-radius: 4px; font-size: 14px; }
  .secure { display: flex; align-items: center; gap: 5px; color: #2c7037; padding-right: 5px; border-right: 1px solid #ddd; margin-right: 5px; }
  .url { flex: 1; color: #6b6b6b; }
  .url b { font-weight: 400; }
  .scheme { color: #2c7037; }
  .host { color: #000; }
  .extensions { display: flex; gap: 12px; }
  .bookmarks { height: 24px; display: flex; align-items: center; padding: 0 9px 3px 12px; font-size: 12px; }
  .bookmark { width: 153px; display: flex; align-items: center; gap: 4px; white-space: nowrap; }
  .bookmark.tiny { width: 63px; }
  .bookmark.short { width: 112px; }
  .bookmark.wide { width: 155px; }
  .more { margin-left: auto; font-size: 14px; color: #555; }

  .page { flex: 1; min-height: 0; overflow-y: auto; scrollbar-width: none; background: #294c7b; }
  .container { max-width: 1170px; margin: 0 auto; }
  header { background: #fff; }
  .head { position: relative; height: 98px; display: flex; align-items: flex-end; padding: 0 12px; }
  .logo { display: flex; align-items: baseline; gap: 10px; width: 261px; height: 55px; }
  .case { font: bold 38px/48px 'DejaVu Serif', serif; background: linear-gradient(#5b8ac9 25%, #1e4a87 75%); -webkit-background-clip: text; background-clip: text; color: transparent; -webkit-text-stroke: 1px transparent; }
  .online { font: italic bold 25px/30px Lato, sans-serif; background: linear-gradient(#6a96cf 15%, #23508f 80%); -webkit-background-clip: text; background-clip: text; color: transparent; }
  .main-nav { display: flex; gap: 41px; padding-bottom: 16px; font-size: 16px; line-height: 22px; font-weight: 700; color: #555; }
  .main-nav a { display: flex; align-items: center; gap: 2px; }
  .account { position: absolute; top: 0; right: 0; width: 151px; height: 43px; display: flex; align-items: center; border: 1px solid #d8d8d8; border-top: 0; color: #7e8388; padding: 0 25px; gap: 21px; }
  .alert { position: relative; }
  .badge { position: absolute; left: 0; top: -6px; background: #cb2525; color: #fff; font-size: 10px; line-height: 13px; padding: 0 4px; border-radius: 3px; }
  .me { display: flex; align-items: center; gap: 1px; }
  .caret { border: 5px solid transparent; border-top-color: currentColor; border-bottom: 0; }
  .band { background: #33598c; }
  .band .container { padding: 0 10px 2px; }
  h1 { margin: 0; font-size: 34px; line-height: 92px; font-weight: 700; color: #fff; }
  .body { display: flex; background: #fff; }
  aside { width: 194px; flex: none; }
  aside a { display: flex; align-items: center; gap: 5px; height: 56px; padding: 3px 15px 0; border-bottom: 1px solid #e8e8e8; font-size: 12px; font-weight: 700; }
  aside a.active { background: #57b3fb; }
  main { flex: 1; min-width: 0; padding: 22px 30px 60px 31px; display: flex; flex-direction: column; }
  .crumbs { display: flex; align-items: center; gap: 3px; font-size: 16px; line-height: 24px; }
  .here { color: #444b55; }
  label { font-size: 12px; line-height: 18px; font-weight: 700; color: #666; }
  .name { display: flex; gap: 5px; padding-top: 9px; }
  .star { color: #e32b20; }
  .desc { padding: 11px 5px 6px; }
  .desc.order { padding-top: 7px; }
  input { height: 36px; border: 1px solid #bbb; border-radius: 2px; background: #f8f8f8; padding: 0 10px; box-shadow: inset 0 1px 2px #0001; }
  .name + input { margin-top: 12px; }
  .desc + input { margin-top: 6px; }
  .editor { border: 1px solid #a6a6a6; display: flex; flex-direction: column; font-family: 'Liberation Sans', Arial, sans-serif; font-size: 12px; color: #333; }
  .tools { display: flex; flex-direction: column; gap: 5px; padding: 6px 8px 7px; border-bottom: 1px solid #a6a6a6; background: linear-gradient(#f4f4f4, #c5c6c4); }
  .row { display: flex; flex-wrap: wrap; gap: 5px 6px; }
  .group { height: 28px; display: flex; align-items: center; border: 1px solid #a0a0a0; border-radius: 3px; background: linear-gradient(#fff, #e4e4e4); }
  .group button { width: 28px; height: 26px; padding: 0; border: 0; background: none; display: flex; align-items: center; justify-content: center; color: #222; }
  .group button:disabled { color: #a5a5a5; }
  .group .source { width: 69px; gap: 3px; color: #333; }
  .sep { width: 1px; height: 18px; margin: 0 2px; background: #bcbcbc; }
  .letter { font-size: 16px; line-height: 18px; font-weight: 700; font-family: 'Noto Sans', sans-serif; }
  .serif { font-family: 'DejaVu Serif', serif; font-size: 15px; }
  .fx { font: italic bold 16px/18px 'Noto Sans', sans-serif; color: #000; }
  .clear { display: flex; align-items: flex-end; font-style: italic; font-size: 15px; }
  .clear small { font-size: 11px; line-height: 11px; font-style: normal; }
  .combo { position: relative; width: 91px; }
  .combo.small { width: 61px; }
  select { appearance: none; width: 100%; height: 26px; border: 0; background: none; padding: 0 10px; }
  .tri { border: 3px solid transparent; border-top-color: #444; border-bottom: 0; }
  .combo .tri { position: absolute; right: 6px; top: 12px; pointer-events: none; }
  .group .color { width: 35px; gap: 2px; }
  .fore { font: bold 14px/14px 'Liberation Sans', sans-serif; border-bottom: 2px solid #888; padding: 0 2px; }
  .back { font: bold 12px/14px 'Liberation Sans', sans-serif; background: #333; color: #fff; border-radius: 2px; padding: 0 3px; }
  .about { font-size: 17px; }
  textarea { display: block; height: 200px; border: 0; resize: none; padding: 20px; }
  .status { height: 27px; display: flex; justify-content: flex-end; gap: 3px; padding: 3px 4px 4px; border-top: 1px solid #a6a6a6; background: linear-gradient(#ebebeb, #c6c6c6); color: #000; line-height: 16px; }
  .grip { align-self: flex-end; border-left: 10px solid transparent; border-bottom: 10px solid #555; }

  .dock { position: absolute; left: 120px; right: 227px; top: calc(100% - 2px); height: 30px; border-radius: 4px; background: #bcbcbc; box-shadow: 0 0 40px rgba(0, 0, 0, 0.24); pointer-events: none; }
  .handle { position: absolute; top: 70px; right: -6px; width: 12px; height: 151px; display: flex; flex-direction: column; justify-content: center; gap: 2px; padding-left: 3px; border: 2px solid #14223a; border-radius: 6px; background: #2471cb; }
  .handle i { height: 2px; background: #cfe2f7; }
</style>
